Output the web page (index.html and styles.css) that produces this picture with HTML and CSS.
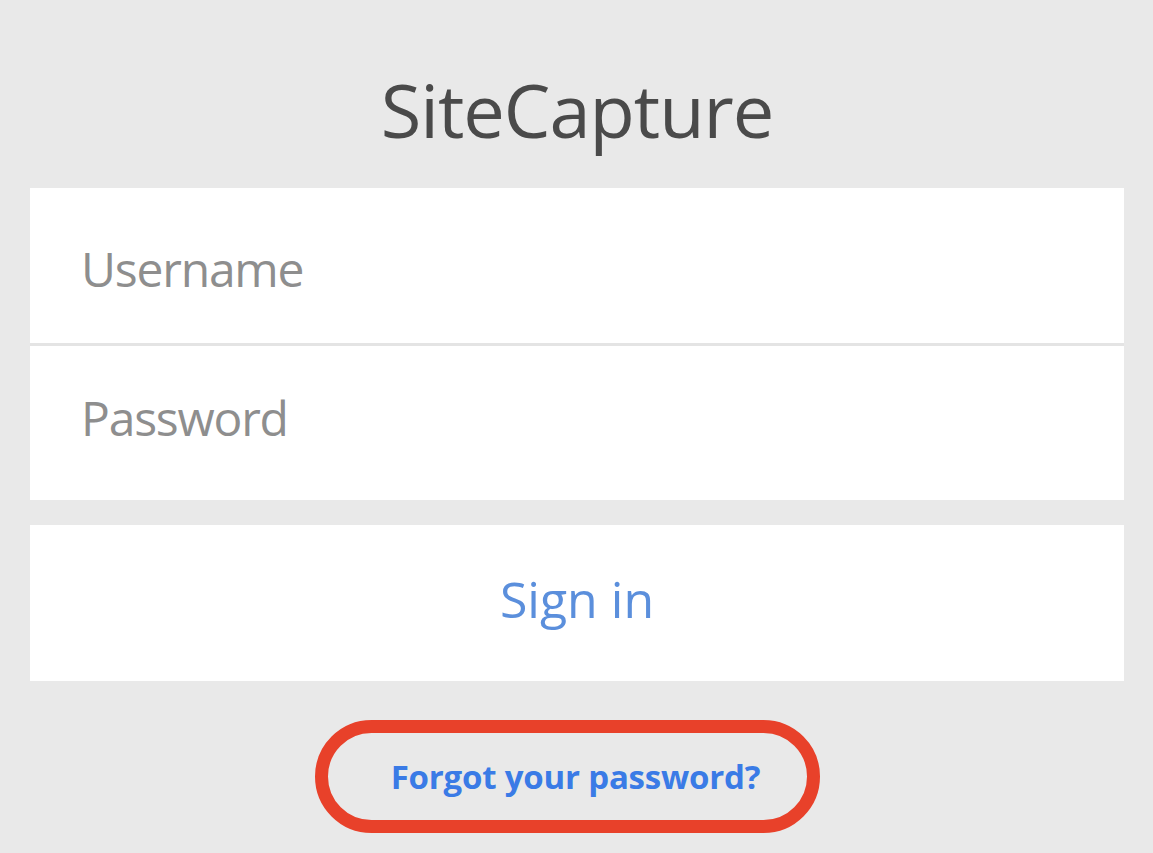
FILE: index.html
```html
<!DOCTYPE html>
<html lang="en">
<head>
<meta charset="utf-8">
<title>SiteCapture</title>
<link rel="stylesheet" href="styles.css">
</head>
<body>
<main class="login">
  <h1 class="title">SiteCapture</h1>
  <div class="fields">
    <div class="field field-user">Username</div>
    <div class="divider"></div>
    <div class="field field-pass">Password</div>
  </div>
  <div class="signin">Sign in</div>
  <div class="forgot-row">
    <a class="forgot" href="#">Forgot your password?</a>
  </div>
</main>
</body>
</html>
```

FILE: styles.css
```css
* { box-sizing: border-box; }
html, body {
  margin: 0;
  padding: 0;
  background: #e9e9e9;
  width: 1153px;
  height: 853px;
  overflow: hidden;
}
body {
  font-family: "Open Sans", "Noto Sans", sans-serif;
}
.login {
  display: flex;
  flex-direction: column;
  padding: 0 29px 0 30px;
}
.title {
  margin: 0;
  height: 188px;
  display: flex;
  align-items: center;
  justify-content: center;
  padding-top: 30px;
  font-size: 74px;
  font-weight: 400;
  color: #4a4a4a;
  letter-spacing: -1px;
}
.fields {
  display: flex;
  flex-direction: column;
  background: #fff;
}
.field {
  display: flex;
  align-items: center;
  padding-left: 51px;
  font-size: 48px;
  color: #8e8e8e;
  letter-spacing: -1.2px;
}
.field-user {
  height: 155px;
  padding-top: 6px;
}
.field-pass {
  height: 154px;
  padding-bottom: 12px;
}
.divider {
  height: 3px;
  background: #e4e4e4;
}
.signin {
  margin-top: 25px;
  height: 156px;
  background: #fff;
  display: flex;
  align-items: center;
  justify-content: center;
  padding-bottom: 8px;
  font-size: 50px;
  color: #5b8fdc;
  letter-spacing: 0;
}
.forgot-row {
  display: flex;
  justify-content: center;
  margin-top: 39px;
  padding-right: 19px;
}
.forgot {
  display: flex;
  align-items: center;
  justify-content: center;
  width: 505px;
  height: 113px;
  border: 13px solid #e8412a;
  border-radius: 57px;
  padding-left: 16px;
  font-size: 33px;
  font-weight: 700;
  color: #3a7be6;
  text-decoration: none;
  letter-spacing: -0.2px;
}
```
